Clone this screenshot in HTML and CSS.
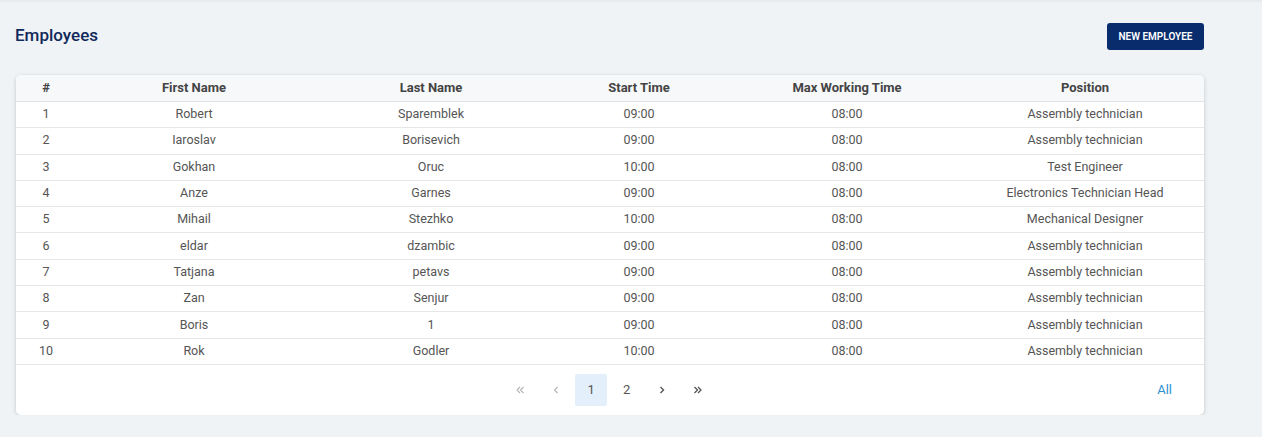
FILE: index.html
```html
<!DOCTYPE html>
<html>
<head>
<meta charset="utf-8">
<link rel="stylesheet" href="styles.css">
</head>
<body>
<div class="page">
  <div class="topbar">
    <h1 class="title">Employees</h1>
    <button class="btn-new">NEW EMPLOYEE</button>
  </div>
  <div class="card">
    <table class="tbl">
      <colgroup>
        <col class="c1"><col class="c2"><col class="c3"><col class="c4"><col class="c5"><col class="c6">
      </colgroup>
      <thead>
        <tr><th>#</th><th>First Name</th><th>Last Name</th><th>Start Time</th><th>Max Working Time</th><th>Position</th></tr>
      </thead>
      <tbody>
        <tr><td>1</td><td>Robert</td><td>Sparemblek</td><td>09:00</td><td>08:00</td><td>Assembly technician</td></tr>
        <tr><td>2</td><td>Iaroslav</td><td>Borisevich</td><td>09:00</td><td>08:00</td><td>Assembly technician</td></tr>
        <tr><td>3</td><td>Gokhan</td><td>Oruc</td><td>10:00</td><td>08:00</td><td>Test Engineer</td></tr>
        <tr><td>4</td><td>Anze</td><td>Garnes</td><td>09:00</td><td>08:00</td><td>Electronics Technician Head</td></tr>
        <tr><td>5</td><td>Mihail</td><td>Stezhko</td><td>10:00</td><td>08:00</td><td>Mechanical Designer</td></tr>
        <tr><td>6</td><td>eldar</td><td>dzambic</td><td>09:00</td><td>08:00</td><td>Assembly technician</td></tr>
        <tr><td>7</td><td>Tatjana</td><td>petavs</td><td>09:00</td><td>08:00</td><td>Assembly technician</td></tr>
        <tr><td>8</td><td>Zan</td><td>Senjur</td><td>09:00</td><td>08:00</td><td>Assembly technician</td></tr>
        <tr><td>9</td><td>Boris</td><td>1</td><td>09:00</td><td>08:00</td><td>Assembly technician</td></tr>
        <tr><td>10</td><td>Rok</td><td>Godler</td><td>10:00</td><td>08:00</td><td>Assembly technician</td></tr>
      </tbody>
    </table>
    <div class="footer">
      <div class="pager">
        <span class="pg dis"><svg width="10" height="10" viewBox="0 0 10 10"><path d="M5 2 L2 5 L5 8 M8.5 2 L5.5 5 L8.5 8" fill="none" stroke="currentColor" stroke-width="1.1"/></svg></span>
        <span class="pg dis"><svg width="10" height="10" viewBox="0 0 10 10"><path d="M6.5 2 L3.5 5 L6.5 8" fill="none" stroke="currentColor" stroke-width="1.1"/></svg></span>
        <span class="pg active">1</span>
        <span class="pg">2</span>
        <span class="pg nav"><svg width="10" height="10" viewBox="0 0 10 10"><path d="M3.5 2 L6.5 5 L3.5 8" fill="none" stroke="currentColor" stroke-width="1.4"/></svg></span>
        <span class="pg nav"><svg width="10" height="10" viewBox="0 0 10 10"><path d="M1.5 2 L4.5 5 L1.5 8 M5 2 L8 5 L5 8" fill="none" stroke="currentColor" stroke-width="1.3"/></svg></span>
      </div>
      <a class="all">All</a>
    </div>
  </div>
</div>
</body>
</html>
```
FILE: styles.css
```css
html, body {
  margin: 0;
  padding: 0;
  background: #eff3f6;
  font-family: Roboto, "Liberation Sans", sans-serif;
}
.page {
  border-top: 2px solid #e7ebee;
  padding: 21px 58px 0 16px;
}
.topbar {
  display: flex;
  justify-content: space-between;
  align-items: flex-start;
  height: 52px;
}
.title {
  margin: 0;
  padding-top: 2px;
  font-size: 17px;
  font-weight: 500;
  color: #10295a;
  margin-left: -1px;
}
.btn-new {
  height: 27px;
  padding: 0;
  border: none;
  border-radius: 3px;
  background: #082c6c;
  color: #fff;
  font-family: Roboto, "Liberation Sans", sans-serif;
  font-size: 10px;
  font-weight: 600;
  width: 97px;
}
.card {
  background: #fff;
  border-radius: 5px;
  box-shadow: 0 1px 4px rgba(0,0,0,0.18);
  overflow: hidden;
}
.tbl {
  width: 100%;
  border-collapse: collapse;
  table-layout: fixed;
  font-size: 12.5px;
}
.c1 { width: 60px; }
.c2 { width: 236px; }
.c3 { width: 238px; }
.c4 { width: 178px; }
.c5 { width: 238px; }
.c6 { width: 238px; }
.tbl th {
  background: #f7f8fa;
  color: #444;
  font-weight: 700;
  height: 24px;
  padding: 0 0 2px;
  text-align: center;
  border-bottom: 1px solid #e2e5e8;
  font-size: 13px;
}
.tbl td {
  color: #555;
  text-align: center;
  height: 23.3px;
  padding: 0 0 2px;
  border-bottom: 1px solid #e4e6e9;
}
.footer {
  height: 50px;
  display: flex;
  align-items: center;
  position: relative;
  justify-content: center;
}
.pager {
  display: flex;
  gap: 3.5px;
  margin-left: -2px;
}
.pg {
  width: 32px;
  height: 32px;
  display: flex;
  align-items: center;
  justify-content: center;
  font-size: 13px;
  color: #555;
  border-radius: 2px;
}
.pg.dis { color: #b0b4b8; }
.pg.nav { color: #555; }
.pg.active { background: #e3f0fb; color: #555; }
.all {
  position: absolute;
  right: 32px;
  top: 17px;
  font-size: 13px;
  color: #2f8fd0;
}
```
